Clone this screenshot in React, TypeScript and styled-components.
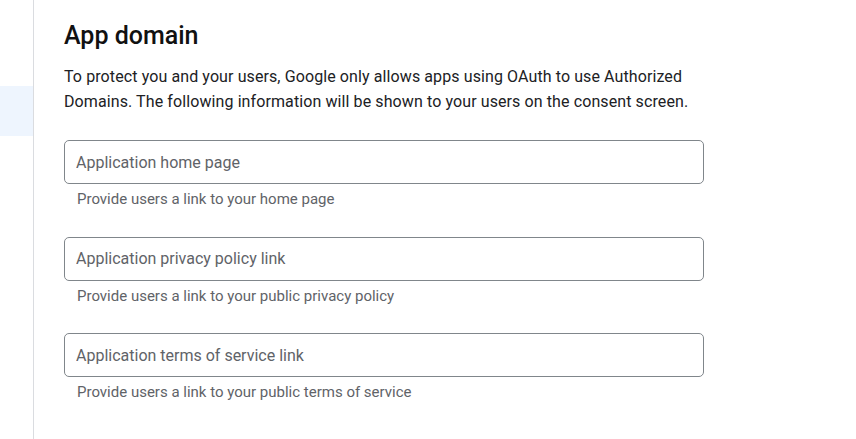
import styled, { createGlobalStyle } from 'styled-components';

const GlobalStyle = createGlobalStyle`
  html, body {
    margin: 0;
    padding: 0;
    background: #fff;
  }
  body {
    font-family: Roboto, "Liberation Sans", Arial, sans-serif;
    color: #202124;
  }
`;

const fields = [
    { label: 'Application home page', hint: 'Provide users a link to your home page' },
    { label: 'Application privacy policy link', hint: 'Provide users a link to your public privacy policy' },
    { label: 'Application terms of service link', hint: 'Provide users a link to your public terms of service' },
];

export default function App() {
    return (
        <>
            <GlobalStyle />
            <Page>
                <Sidebar>
                    <SideItem active />
                </Sidebar>
                <Content>
                    <Title>App domain</Title>
                    <Description>
                        To protect you and your users, Google only allows apps using OAuth to use Authorized
                        Domains. The following information will be shown to your users on the consent screen.
                    </Description>
                    <Fields>
                        {fields.map((f) => (
                            <Field key={f.label}>
                                <TextInput type="text" placeholder={f.label} />
                                <Hint>{f.hint}</Hint>
                            </Field>
                        ))}
                    </Fields>
                </Content>
            </Page>
        </>
    );
}

const Page = styled.div`
  display: flex;
  min-height: 439px;
`;

const Sidebar = styled.aside`
  flex-shrink: 0;
  width: 34px;
  border-right: 1px solid #dadce0;
  padding-top: 86px;
  box-sizing: border-box;
`;

const SideItem = styled.div<{ active?: boolean }>`
  height: 50px;
  background-color: ${(props) => props.active ? '#eef5fe' : 'transparent'};
`;

const Content = styled.main`
  padding: 20px 0 0 30px;
  width: 640px;
`;

const Title = styled.h1`
  margin: 0;
  font-size: 25px;
  font-weight: 500;
  line-height: 32px;
  color: #111;
`;

const Description = styled.p`
  margin: 12px 0 0;
  font-size: 16px;
  line-height: 25px;
  letter-spacing: 0.1px;
  color: #202124;
`;

const Fields = styled.div`
  display: flex;
  flex-direction: column;
  gap: 25.5px;
  margin-top: 26px;
`;

const Field = styled.div`
  display: flex;
  flex-direction: column;
`;

const TextInput = styled.input`
  box-sizing: border-box;
  width: 640px;
  height: 44px;
  padding: 0 11px;
  border: 1px solid #80868b;
  border-radius: 5px;
  font-family: Roboto, "Liberation Sans", Arial, sans-serif;
  font-size: 16px;
  color: #202124;
  outline: none;
  &::placeholder {
    color: #5f6368;
  }
`;

const Hint = styled.div`
  margin-top: 3px;
  padding-left: 13px;
  font-size: 15px;
  line-height: 24px;
  color: #5f6368;
`;
